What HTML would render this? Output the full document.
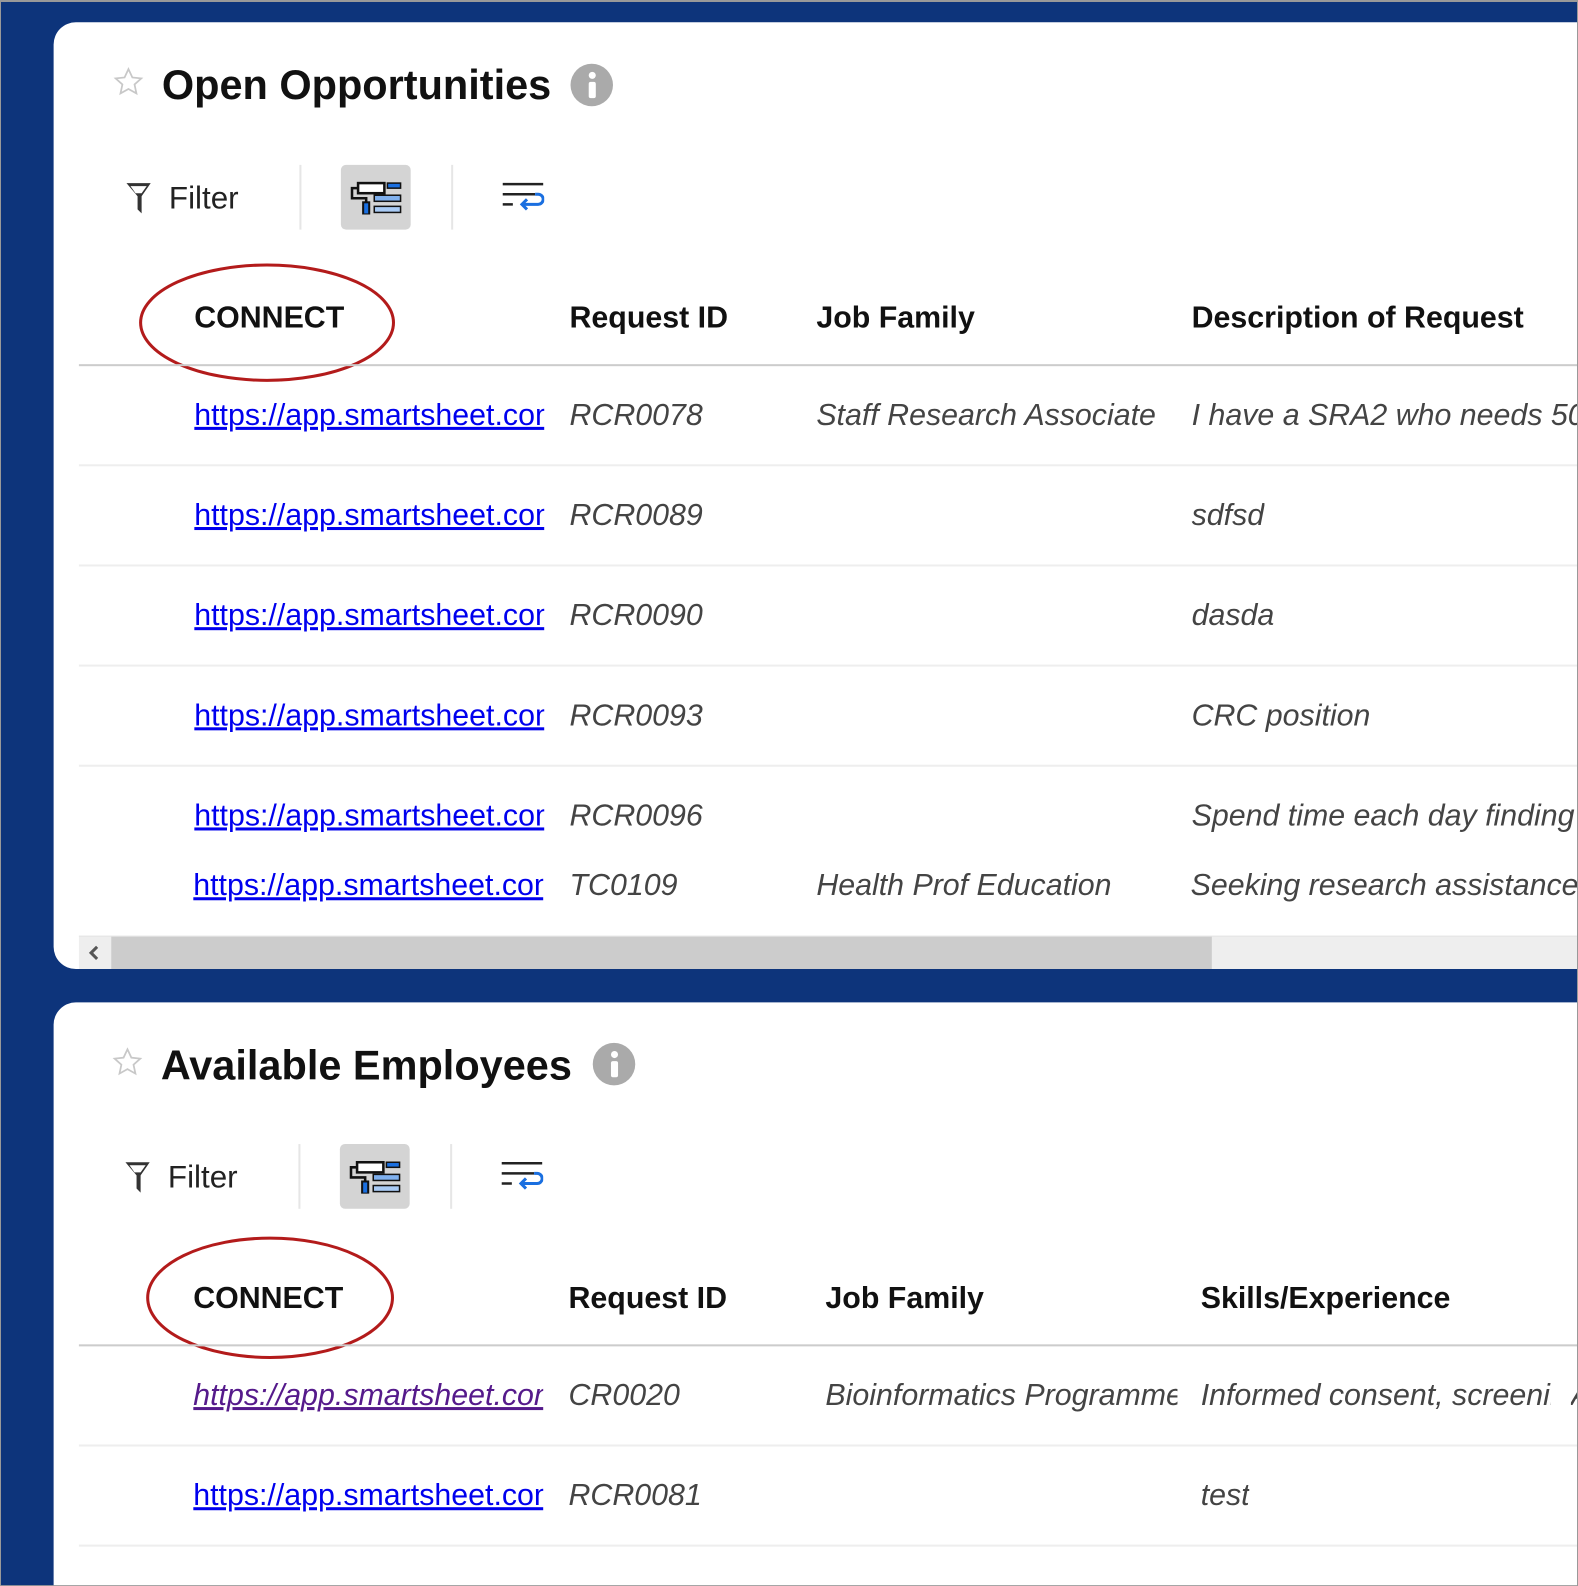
<!DOCTYPE html>
<html><head><meta charset="utf-8"><style>
*{margin:0;padding:0;box-sizing:border-box}
html,body{width:1578px;height:1586px;overflow:hidden;background:#0d347b}
#w{position:absolute;left:0;top:0;width:1560px;height:1568px;transform:scale(1.01154);transform-origin:0 0;font-family:"Liberation Sans",Arial,sans-serif;overflow:hidden}
.frame{position:absolute;left:0;top:0;width:1560px;height:1568px;border:1px solid #999;border-top:2px solid #999;z-index:10;pointer-events:none}
.panel{position:absolute;left:53px;width:1507px;background:#fff;border-radius:22px 0 0 22px;overflow:hidden}
.a{position:absolute;white-space:nowrap}
.title{font-size:41px;font-weight:bold;color:#111;line-height:48px}
.info{position:absolute;width:42px;height:42px;border-radius:50%;background:#aaa}
.info:before{content:"";position:absolute;left:18px;top:8px;width:7px;height:7px;border-radius:50%;background:#fff}
.info:after{content:"";position:absolute;left:18px;top:18px;width:7px;height:16px;border-radius:2px;background:#fff}
.filt{font-size:31px;color:#222;line-height:36px}
.div{position:absolute;width:2px;height:64px;background:#e6e6e6}
.btn{position:absolute;width:69px;height:64px;background:#d4d4d4;border-radius:5px}
.hd{font-size:30px;font-weight:bold;color:#111;line-height:36px}
.hline{position:absolute;left:25px;right:0;height:2px;background:#ccc}
.sep{position:absolute;left:25px;right:0;height:2px;background:#eee}
.c{font-size:30px;font-style:italic;color:#444;line-height:36px;overflow:hidden}
.l{font-size:30px;color:#0000ee;text-decoration:underline;line-height:36px;overflow:hidden;width:346px}
</style></head><body><div id="w">
<div class="frame"></div>

<!-- Panel 1 -->
<div class="panel" style="top:22px;height:936px">
 <svg class="a" style="left:58px;top:43px" width="32" height="32" viewBox="0 0 24 24"><path d="M12 2.5l2.9 6.2 6.6.7-5 4.5 1.4 6.6L12 17.2l-5.9 3.3 1.4-6.6-5-4.5 6.6-.7z" fill="none" stroke="#c8c8c8" stroke-width="1.3"/></svg>
 <div class="a title" style="left:107px;top:38px">Open Opportunities</div>
 <div class="info" style="left:511px;top:41px"></div>
 <svg class="a" style="left:70px;top:157px" width="28" height="34" viewBox="0 0 28 34"><path d="M2 2h24l-9 13v17l-4-4V15z" fill="#333"/><path d="M6 5h16l-5 7h-6z" fill="#fff"/></svg>
 <div class="a filt" style="left:114px;top:156px">Filter</div>
 <div class="div" style="left:243px;top:141px"></div>
 <div class="btn" style="left:284px;top:141px"><svg style="position:absolute;left:8px;top:15px" width="54" height="34" viewBox="0 0 54 34"><rect x="9" y="3" width="26" height="10" fill="#fff" stroke="#111" stroke-width="2.5"/><path d="M9 8H3v10h14v5" fill="none" stroke="#111" stroke-width="2.5"/><rect x="14" y="22" width="6" height="12" fill="#1a6fe0" stroke="#111" stroke-width="2"/><rect x="38" y="3" width="13" height="5" fill="#1a6fe0" stroke="#111" stroke-width="1.5"/><rect x="25" y="15" width="26" height="6" fill="#7fb0ee" stroke="#111" stroke-width="1.5"/><rect x="25" y="26" width="26" height="6" fill="#a9cbf5" stroke="#111" stroke-width="1.5"/></svg></div>
 <div class="div" style="left:393px;top:141px"></div>
 <svg class="a" style="left:443px;top:158px" width="42" height="30" viewBox="0 0 42 30"><path d="M1 2h40M1 12h32M1 22h10" stroke="#222" stroke-width="2.5"/><path d="M33 12h3a5 5 0 010 10H22" fill="none" stroke="#1a6fe0" stroke-width="3"/><path d="M25 17l-5 5 5 5" fill="none" stroke="#1a6fe0" stroke-width="3"/></svg>
 <div class="a hd" style="left:139px;top:275px">CONNECT</div>
 <div class="a hd" style="left:510px;top:275px">Request ID</div>
 <div class="a hd" style="left:754px;top:275px">Job Family</div>
 <div class="a hd" style="left:1125px;top:275px">Description of Request</div>
 <svg class="a" style="left:80px;top:236px" width="260" height="124"><ellipse cx="131" cy="61" rx="125" ry="57" fill="none" stroke="#b31b1b" stroke-width="3"/></svg>
 <div class="hline" style="top:338px"></div>
 <div class="a l" style="left:139px;top:371px">https://app.smartsheet.com</div>
 <div class="a c" style="left:510px;top:371px">RCR0078</div>
 <div class="a c" style="left:754px;top:371px;width:346px">Staff Research Associate</div>
 <div class="a c" style="left:1125px;top:371px">I have a SRA2 who needs 50%</div>
 <div class="sep" style="top:437px"></div>
 <div class="a l" style="left:139px;top:470px">https://app.smartsheet.com</div>
 <div class="a c" style="left:510px;top:470px">RCR0089</div>
 <div class="a c" style="left:1125px;top:470px">sdfsd</div>
 <div class="sep" style="top:536px"></div>
 <div class="a l" style="left:139px;top:569px">https://app.smartsheet.com</div>
 <div class="a c" style="left:510px;top:569px">RCR0090</div>
 <div class="a c" style="left:1125px;top:569px">dasda</div>
 <div class="sep" style="top:635px"></div>
 <div class="a l" style="left:139px;top:668px">https://app.smartsheet.com</div>
 <div class="a c" style="left:510px;top:668px">RCR0093</div>
 <div class="a c" style="left:1125px;top:668px">CRC position</div>
 <div class="sep" style="top:734px"></div>
 <div class="a l" style="left:139px;top:767px">https://app.smartsheet.com</div>
 <div class="a c" style="left:510px;top:767px">RCR0096</div>
 <div class="a c" style="left:1125px;top:767px">Spend time each day finding</div>
 <div class="a l" style="left:138px;top:836px">https://app.smartsheet.com</div>
 <div class="a c" style="left:510px;top:836px">TC0109</div>
 <div class="a c" style="left:754px;top:836px">Health Prof Education</div>
 <div class="a c" style="left:1124px;top:836px">Seeking research assistance</div>
 <div class="a" style="left:25px;top:903px;right:0;height:33px;background:#eee;border-top:1px solid #e4e4e4"></div>
 <div class="a" style="left:57px;top:904px;width:1088px;height:32px;background:#ccc"></div>
 <svg class="a" style="left:32px;top:911px" width="16" height="18" viewBox="0 0 16 18"><path d="M11 3L5 9l6 6" fill="none" stroke="#555" stroke-width="3"/></svg>
</div>

<!-- Panel 2 -->
<div class="panel" style="top:991px;height:600px;border-radius:22px 0 0 0">
 <svg class="a" style="left:57px;top:43px" width="32" height="32" viewBox="0 0 24 24"><path d="M12 2.5l2.9 6.2 6.6.7-5 4.5 1.4 6.6L12 17.2l-5.9 3.3 1.4-6.6-5-4.5 6.6-.7z" fill="none" stroke="#c8c8c8" stroke-width="1.3"/></svg>
 <div class="a title" style="left:106px;top:38px">Available Employees</div>
 <div class="info" style="left:533px;top:40px"></div>
 <svg class="a" style="left:69px;top:156px" width="28" height="34" viewBox="0 0 28 34"><path d="M2 2h24l-9 13v17l-4-4V15z" fill="#333"/><path d="M6 5h16l-5 7h-6z" fill="#fff"/></svg>
 <div class="a filt" style="left:113px;top:155px">Filter</div>
 <div class="div" style="left:242px;top:140px"></div>
 <div class="btn" style="left:283px;top:140px"><svg style="position:absolute;left:8px;top:15px" width="54" height="34" viewBox="0 0 54 34"><rect x="9" y="3" width="26" height="10" fill="#fff" stroke="#111" stroke-width="2.5"/><path d="M9 8H3v10h14v5" fill="none" stroke="#111" stroke-width="2.5"/><rect x="14" y="22" width="6" height="12" fill="#1a6fe0" stroke="#111" stroke-width="2"/><rect x="38" y="3" width="13" height="5" fill="#1a6fe0" stroke="#111" stroke-width="1.5"/><rect x="25" y="15" width="26" height="6" fill="#7fb0ee" stroke="#111" stroke-width="1.5"/><rect x="25" y="26" width="26" height="6" fill="#a9cbf5" stroke="#111" stroke-width="1.5"/></svg></div>
 <div class="div" style="left:392px;top:140px"></div>
 <svg class="a" style="left:442px;top:157px" width="42" height="30" viewBox="0 0 42 30"><path d="M1 2h40M1 12h32M1 22h10" stroke="#222" stroke-width="2.5"/><path d="M33 12h3a5 5 0 010 10H22" fill="none" stroke="#1a6fe0" stroke-width="3"/><path d="M25 17l-5 5 5 5" fill="none" stroke="#1a6fe0" stroke-width="3"/></svg>
 <div class="a hd" style="left:138px;top:275px">CONNECT</div>
 <div class="a hd" style="left:509px;top:275px">Request ID</div>
 <div class="a hd" style="left:763px;top:275px">Job Family</div>
 <div class="a hd" style="left:1134px;top:275px">Skills/Experience</div>
 <svg class="a" style="left:90px;top:230px" width="250" height="126"><ellipse cx="124" cy="62" rx="121" ry="59" fill="none" stroke="#b31b1b" stroke-width="3"/></svg>
 <div class="hline" style="top:338px"></div>
 <div class="a l" style="left:138px;top:371px;color:#551a8b;font-style:italic">https://app.smartsheet.com</div>
 <div class="a c" style="left:509px;top:371px">CR0020</div>
 <div class="a c" style="left:763px;top:371px;width:348px">Bioinformatics Programmer</div>
 <div class="a c" style="left:1134px;top:371px;width:346px">Informed consent, screening</div>
 <div class="a c" style="left:1500px;top:371px">A</div>
 <div class="sep" style="top:437px"></div>
 <div class="a l" style="left:138px;top:470px">https://app.smartsheet.com</div>
 <div class="a c" style="left:509px;top:470px">RCR0081</div>
 <div class="a c" style="left:1134px;top:470px">test</div>
 <div class="sep" style="top:536px"></div>
 <div class="a l" style="left:138px;top:583px">https://app.smartsheet.com</div>
 <div class="a c" style="left:509px;top:583px">RCR0084</div>
 <div class="a c" style="left:763px;top:583px;width:348px">Administrative Officer</div>
 <div class="a c" style="left:1134px;top:583px">Problem</div>
</div>
</div></body></html>
